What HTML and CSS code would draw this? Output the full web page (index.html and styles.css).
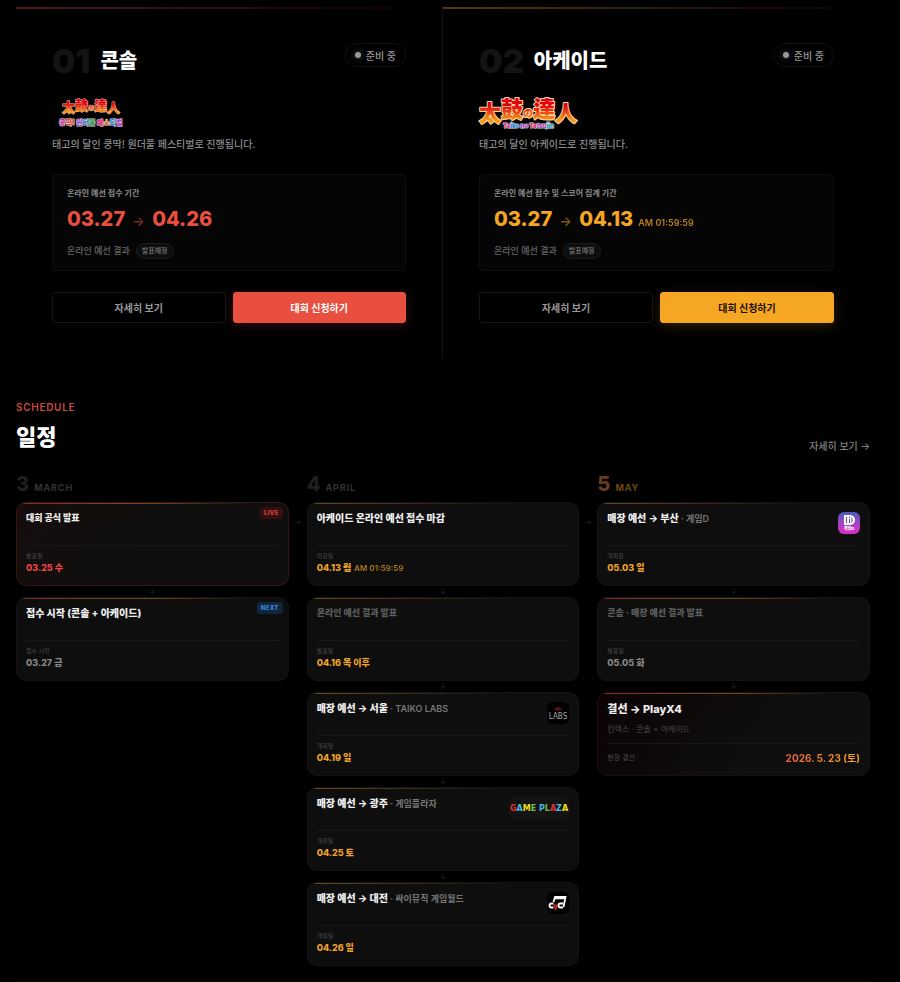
FILE: index.html
```html
<!DOCTYPE html>
<html lang="ko">
<head>
  <meta charset="UTF-8" />
  <meta name="viewport" content="width=device-width, initial-scale=1.0"/>
  <title>태고의 달인 대회</title>
  <link rel="stylesheet" href="styles.css">
</head>
<body>

<section class="tracks">
  <article class="track track-console">
    <div class="track-head">
      <div class="track-name">
        <span class="track-num">01</span>
        <h2>콘솔</h2>
      </div>
      <span class="status"><i class="dot"></i>준비 중</span>
    </div>
    <svg class="track-logo" width="78" height="36" viewBox="0 0 78 36" role="img" aria-label="태고의 달인 쿵딱! 원더풀 페스티벌">
      <defs>
        <linearGradient id="fire" x1="0" y1="0" x2="0" y2="1">
          <stop offset="0.4" stop-color="#e00010"/>
          <stop offset="0.8" stop-color="#f59a1c"/>
        </linearGradient>
      </defs>
      <text class="logo-jp" x="10" y="19" font-size="13" fill="url(#fire)" stroke="#e8b8a0" stroke-width="1">太<tspan dy="-2">鼓</tspan><tspan font-size="6">の</tspan>達<tspan dy="2">人</tspan></text>
      <text class="logo-kr" x="7" y="32" font-size="7" stroke="#e6d3de" stroke-width="1"><tspan fill="#c23a9a">쿵</tspan><tspan fill="#e0442f">딱!</tspan> <tspan fill="#8a4fc0">원</tspan><tspan fill="#1e88d8">더</tspan><tspan fill="#2e9e58">풀</tspan> <tspan fill="#d8327a">페</tspan><tspan fill="#ef7d1a">스</tspan><tspan fill="#1e88d8">티</tspan><tspan fill="#a046b8">벌</tspan></text>
    </svg>
    <p class="track-desc">태고의 달인 쿵딱! 원더풀 페스티벌로 진행됩니다.</p>
    <div class="period">
      <p class="period-label">온라인 예선 접수 기간</p>
      <p class="period-dates"><b>03.27</b><span class="to">→</span><b>04.26</b></p>
      <p class="period-result">온라인 예선 결과 <span class="chip">발표예정</span></p>
    </div>
    <div class="actions">
      <button type="button" class="btn btn-ghost">자세히 보기</button>
      <button type="button" class="btn btn-main">대회 신청하기</button>
    </div>
  </article>

  <article class="track track-arcade">
    <div class="track-head">
      <div class="track-name">
        <span class="track-num">02</span>
        <h2>아케이드</h2>
      </div>
      <span class="status"><i class="dot"></i>준비 중</span>
    </div>
    <svg class="track-logo" width="100" height="36" viewBox="0 0 100 36" role="img" aria-label="태고의 달인">
      <text class="logo-jp" x="0" y="28" font-size="22" fill="url(#fire)" stroke="#ffd9a0" stroke-width="2">太<tspan dy="-4">鼓</tspan><tspan font-size="10">の</tspan>達<tspan dy="4">人</tspan></text>
      <text class="logo-kr" x="24" y="35" font-size="6" stroke="#f3e3ee" stroke-width="1"><tspan fill="#d8327a">Ta</tspan><tspan fill="#1e88d8">iko</tspan> <tspan fill="#a046b8">no</tspan> <tspan fill="#d8327a">Ta</tspan><tspan fill="#a046b8">tsu</tspan><tspan fill="#2a9bb0">jin</tspan></text>
    </svg>
    <p class="track-desc">태고의 달인 아케이드로 진행됩니다.</p>
    <div class="period">
      <p class="period-label">온라인 예선 접수 및 스코어 집계 기간</p>
      <p class="period-dates"><b>03.27</b><span class="to">→</span><b>04.13</b><small>AM 01:59:59</small></p>
      <p class="period-result">온라인 예선 결과 <span class="chip">발표예정</span></p>
    </div>
    <div class="actions">
      <button type="button" class="btn btn-ghost">자세히 보기</button>
      <button type="button" class="btn btn-main">대회 신청하기</button>
    </div>
  </article>
</section>

<section class="schedule">
  <div class="schedule-head">
    <div>
      <p class="eyebrow">SCHEDULE</p>
      <h2>일정</h2>
    </div>
    <a href="#" class="more">자세히 보기 →</a>
  </div>

  <div class="months">
    <div class="month">
      <h3 class="month-title"><b>3</b><span>MARCH</span></h3>
      <span class="next-month">→</span>
      <div class="card card-live mixed">
        <div class="card-top">
          <h4 class="small">대회 공식 발표</h4>
          <span class="badge badge-live">LIVE</span>
        </div>
        <div class="card-foot">
          <span class="label">발표일</span>
          <span class="date red">03.25 수</span>
        </div>
      </div>
      <span class="down">↓</span>
      <div class="card mixed">
        <div class="card-top">
          <h4>접수 시작 (콘솔 + 아케이드)</h4>
          <span class="badge badge-next">NEXT</span>
        </div>
        <div class="card-foot">
          <span class="label">접수 시작</span>
          <span class="date gray">03.27 금</span>
        </div>
      </div>
    </div>

    <div class="month">
      <h3 class="month-title"><b>4</b><span>APRIL</span></h3>
      <span class="next-month">→</span>
      <div class="card">
        <div class="card-top"><h4>아케이드 온라인 예선 접수 마감</h4></div>
        <div class="card-foot">
          <span class="label">마감일</span>
          <span class="date">04.13 월 <small>AM 01:59:59</small></span>
        </div>
      </div>
      <span class="down">↓</span>
      <div class="card">
        <div class="card-top"><h4 class="small dim">온라인 예선 결과 발표</h4></div>
        <div class="card-foot">
          <span class="label">발표일</span>
          <span class="date">04.16 목 이후</span>
        </div>
      </div>
      <span class="down">↓</span>
      <div class="card">
        <div class="card-top">
          <h4>매장 예선 → 서울 <small>· TAIKO LABS</small></h4>
          <svg class="store" width="22" height="22" viewBox="0 0 22 22" role="img" aria-label="TAIKO LABS">
            <rect width="22" height="22" rx="6" fill="#000"/>
            <path d="M8 8Q8 6.500 9.500 6.500 11 5 12.500 6.500 14 6.500 14 8M9.500 8H12.500" fill="none" stroke="#b3202a" stroke-width="1"/>
            <text class="labs" x="11" y="17" text-anchor="middle" font-size="8" fill="#a8a8a8">LABS</text>
          </svg>
        </div>
        <div class="card-foot">
          <span class="label">개최일</span>
          <span class="date">04.19 일</span>
        </div>
      </div>
      <span class="down">↓</span>
      <div class="card">
        <div class="card-top">
          <h4>매장 예선 → 광주 <small>· 게임플라자</small></h4>
          <svg class="store" width="60" height="22" viewBox="0 0 60 22" role="img" aria-label="GAME PLAZA">
            <rect width="60" height="22" rx="6" fill="#141414"/>
            <text class="plaza" x="30" y="14" text-anchor="middle" font-size="8"><tspan fill="#e0322c">G</tspan><tspan fill="#4fb8e0">A</tspan><tspan fill="#f0e01c">M</tspan><tspan fill="#6cc04a">E</tspan> <tspan fill="#4fb8e0">P</tspan><tspan fill="#6cc04a">L</tspan><tspan fill="#e0322c">A</tspan><tspan fill="#4fb8e0">Z</tspan><tspan fill="#f0e01c">A</tspan></text>
          </svg>
        </div>
        <div class="card-foot">
          <span class="label">개최일</span>
          <span class="date">04.25 토</span>
        </div>
      </div>
      <span class="down">↓</span>
      <div class="card">
        <div class="card-top">
          <h4>매장 예선 → 대전 <small>· 싸이뮤직 게임월드</small></h4>
          <svg class="store" width="22" height="22" viewBox="0 0 22 22" role="img" aria-label="싸이뮤직 게임월드">
            <rect width="22" height="22" rx="6" fill="#000"/>
            <g fill="none" stroke="#fff" stroke-width="1.800">
              <path d="M6.500 10L8 5H18.500L16.500 15"/>
              <path d="M8 6.500H18" stroke-width="1.500"/>
              <path d="M6.500 11.500H4.500Q2.500 11.500 2.500 13.500T4.500 15.500H6.500"/>
              <path d="M16 11.500H13.500Q11.500 11.500 11.500 13.500T13.500 15.500H16"/>
            </g>
            <path d="M6.500 12L8.500 15M10.500 12L8 18" fill="none" stroke="#e0322c" stroke-width="1.600"/>
          </svg>
        </div>
        <div class="card-foot">
          <span class="label">개최일</span>
          <span class="date">04.26 일</span>
        </div>
      </div>
    </div>

    <div class="month month-final">
      <h3 class="month-title"><b>5</b><span>MAY</span></h3>
      <div class="card">
        <div class="card-top">
          <h4>매장 예선 → 부산 <small>· 게임D</small></h4>
          <svg class="store" width="22" height="22" viewBox="0 0 22 22" role="img" aria-label="게임D">
            <defs>
              <linearGradient id="gamed" x1="0" y1="0" x2="0" y2="1">
                <stop offset="0" stop-color="#4a5cc0"/>
                <stop offset="0.5" stop-color="#a044c4"/>
                <stop offset="1" stop-color="#e02cc0"/>
              </linearGradient>
            </defs>
            <rect width="22" height="22" rx="6" fill="url(#gamed)"/>
            <path d="M6 3H12Q17 3.500 17 8T12 13H6Z" fill="#fff"/>
            <path d="M8.500 5V11M11.500 7V11M11.500 4.500V6M13.500 5.500Q15 8 13.500 10.500" fill="none" stroke="#5a50a8" stroke-width="1.100"/>
            <text x="11" y="18" text-anchor="middle" font-size="4" font-weight="900" fill="#fff">게임D</text>
          </svg>
        </div>
        <div class="card-foot">
          <span class="label">개최일</span>
          <span class="date">05.03 일</span>
        </div>
      </div>
      <span class="down">↓</span>
      <div class="card mixed">
        <div class="card-top"><h4 class="small dim">콘솔 · 매장 예선 결과 발표</h4></div>
        <div class="card-foot">
          <span class="label">발표일</span>
          <span class="date gray">05.05 화</span>
        </div>
      </div>
      <span class="down">↓</span>
      <div class="card card-final mixed">
        <div class="card-top">
          <div>
            <h4>결선 → PlayX4</h4>
            <p class="place">킨텍스 · 콘솔 + 아케이드</p>
          </div>
        </div>
        <div class="card-foot">
          <span class="label">현장 결선</span>
          <span class="date">2026. 5. 23 (토)</span>
        </div>
      </div>
    </div>
  </div>
</section>

</body>
</html>
```
FILE: styles.css
```css
* {
  box-sizing: border-box;
}
body {
  margin: 0;
  padding: 7px 30px 0 16px;
  background: #000;
  color: #fff;
  font-family: Inter, "Noto Sans CJK KR", sans-serif;
}
h2, h3, h4, p {
  margin: 0;
}

/* tracks */
.tracks {
  display: grid;
  grid-template-columns: 1fr 1fr;
}
.track {
  position: relative;
  padding: 36px 36px 35px;
  --main: #e94f3f;
}
.track-console {
  border-right: 1px solid #141414;
}
.track-arcade {
  --main: #f5a623;
}
.track::before {
  content: "";
  position: absolute;
  top: 0;
  left: 0;
  right: 0;
  height: 2px;
  background: linear-gradient(90deg, var(--main), transparent);
  opacity: 0.35;
}
.track-head {
  display: flex;
  justify-content: space-between;
  align-items: flex-start;
}
.track-name {
  display: flex;
  align-items: center;
  gap: 10px;
  line-height: 36px;
}
.track-num {
  font-size: 33px;
  font-weight: 900;
  color: #141414;
}
.track-name h2 {
  font-size: 20px;
  font-weight: 800;
}
.status {
  display: flex;
  align-items: center;
  gap: 5px;
  height: 24px;
  padding: 0 9px;
  border: 1px solid #111;
  border-radius: 12px;
  font-size: 10px;
  font-weight: 500;
  color: #999;
}
.dot {
  width: 6px;
  height: 6px;
  border-radius: 50%;
  background: #999;
  box-shadow: 0 0 6px rgba(255,255,255,0.35);
}
.track-logo {
  display: block;
  overflow: visible;
  margin-top: 14px;
}
.logo-jp {
  font-family: "Noto Sans CJK JP", sans-serif;
  font-weight: 900;
  paint-order: stroke;
  stroke-linejoin: round;
}
.logo-kr {
  font-weight: 900;
  paint-order: stroke;
  stroke-linejoin: round;
}
.track-desc {
  margin-top: 7px;
  font-size: 10px;
  font-weight: 500;
  line-height: 16px;
  color: #8c8c8c;
}
.period {
  margin-top: 22px;
  padding: 12px 14px 11px;
  border: 1px solid #0e0e0e;
  border-radius: 4px;
  background: #050505;
}
.period-label {
  font-size: 8px;
  font-weight: 600;
  line-height: 12px;
  color: #8c8c8c;
}
.period-dates {
  display: flex;
  align-items: baseline;
  margin-top: 8px;
  line-height: 12px;
  color: var(--main);
}
.period-dates b {
  font-size: 20px;
  font-weight: 800;
  line-height: 24px;
}
.period-dates .to {
  width: 27px;
  text-align: center;
  font-size: 13px;
  font-weight: 600;
  opacity: 0.5;
}
.period-dates small {
  margin-left: 5px;
  font-size: 9px;
  font-weight: 600;
  opacity: 0.75;
}
.period-result {
  display: flex;
  align-items: center;
  gap: 6px;
  margin-top: 12px;
  font-size: 9px;
  font-weight: 500;
  line-height: 16px;
  color: #666;
}
.chip {
  padding: 0 5px;
  border: 1px solid #1c1c1c;
  border-radius: 8px;
  background: #0e0e0e;
  font-size: 7px;
  font-weight: 700;
  line-height: 14px;
}
.actions {
  display: grid;
  grid-template-columns: 1fr 1fr;
  gap: 7px;
  margin-top: 21px;
}
.btn {
  height: 31px;
  padding: 0;
  border: 1px solid #141414;
  border-radius: 3px;
  background: transparent;
  color: #999;
  font-family: inherit;
  font-size: 10px;
  font-weight: 700;
  cursor: pointer;
}
.btn-main {
  border-color: var(--main);
  background: var(--main);
  color: #fff;
  box-shadow: 0 3px 12px rgba(233,79,63,0.2);
}
.track-arcade .btn-main {
  color: #1a1000;
  box-shadow: 0 3px 12px rgba(245,166,35,0.2);
}

/* schedule */
.schedule {
  margin-top: 43px;
  padding-bottom: 15px;
  border-bottom: 1px solid #0e0808;
}
.schedule-head {
  display: flex;
  justify-content: space-between;
  align-items: flex-end;
}
.eyebrow {
  font-size: 10px;
  font-weight: 600;
  line-height: 12px;
  letter-spacing: 0.07em;
  color: #c94a3a;
}
.schedule-head h2 {
  margin-top: 9px;
  font-size: 22px;
  font-weight: 800;
  line-height: 30px;
}
.more {
  font-size: 10px;
  font-weight: 500;
  line-height: 12px;
  color: #808080;
  text-decoration: none;
}
.months {
  display: grid;
  grid-template-columns: 1fr 1fr 1fr;
  gap: 18px;
  margin-top: 20px;
}
.month {
  position: relative;
}
.month-title {
  display: flex;
  align-items: baseline;
  gap: 5px;
  margin-bottom: 6px;
  font-size: 9px;
  font-weight: 700;
  line-height: 12px;
  letter-spacing: 0.1em;
  color: #333;
}
.month-title b {
  font-size: 20px;
  font-weight: 800;
  line-height: 24px;
  letter-spacing: 0;
  color: #1f1f1f;
}
.month-final .month-title {
  color: #70480f;
}
.month-final .month-title b {
  color: #6b3a1c;
}
.next-month {
  position: absolute;
  top: 44px;
  left: 100%;
  width: 18px;
  text-align: center;
  font-size: 8px;
  line-height: 12px;
  color: #222;
}
.down {
  display: block;
  text-align: center;
  font-size: 8px;
  line-height: 11px;
  color: #222;
}
.card {
  position: relative;
  overflow: hidden;
  padding: 8px 9px 10px;
  border: 1px solid #131313;
  border-radius: 10px;
  background: #0e0e0e;
}
.card::before {
  content: "";
  position: absolute;
  top: -1px;
  left: 0;
  right: 0;
  height: 2px;
  background: linear-gradient(90deg, #f5a623, transparent 75%);
  opacity: 0.4;
}
.card.mixed::before {
  background: linear-gradient(90deg, #e94f3f, #c98a1c 50%, transparent 85%);
  opacity: 0.5;
}
.card-live {
  border-color: #3a1414;
  background: linear-gradient(135deg, #160d0d, #0f0f0f 50%);
}
.card-top {
  display: flex;
  justify-content: space-between;
  align-items: flex-start;
  min-height: 34px;
}
.card h4 {
  font-size: 10px;
  font-weight: 800;
  line-height: 14px;
  color: #eee;
}
.card h4 small {
  font-size: 9px;
  font-weight: 600;
  color: #777;
}
.card h4.small {
  font-size: 9px;
}
.card h4.dim {
  color: #5c5c5c;
}
.store {
  flex: none;
  margin-top: 1px;
}
.labs {
  font-family: "Liberation Sans Narrow", "DejaVu Sans Condensed", sans-serif;
}
.plaza {
  font-family: "DejaVu Sans", sans-serif;
  font-weight: 700;
}
.badge {
  margin: -4px -4px 0 0;
  padding: 0 4px;
  border-radius: 3px;
  font-size: 6px;
  font-weight: 800;
  line-height: 12px;
  letter-spacing: 0.05em;
}
.badge-live {
  background: #361010;
  color: #dc4040;
}
.badge-next {
  background: #10263f;
  color: #3f86d8;
}
.card-foot {
  display: flex;
  flex-direction: column;
  gap: 1px;
  padding-top: 6px;
  border-top: 1px solid #171717;
}
.label {
  font-size: 6px;
  line-height: 8px;
  color: #4a4a4a;
}
.date {
  font-size: 9px;
  font-weight: 800;
  line-height: 14px;
  color: #f0a32a;
}
.date small {
  margin-left: 1px;
  font-size: 8px;
  font-weight: 600;
  opacity: 0.7;
}
.date.red {
  color: #ee4545;
}
.date.gray {
  color: #888;
}
.card-final {
  border-color: #1a1010;
  background: linear-gradient(120deg, #0c0303, #0f0f0f 60%);
}
.card-final .card-top {
  min-height: 42px;
}
.card-final h4 {
  font-size: 11px;
  line-height: 16px;
}
.place {
  margin-top: 6px;
  font-size: 8px;
  line-height: 12px;
  color: #4a4a4a;
}
.card-final .card-foot {
  flex-direction: row;
  justify-content: space-between;
  align-items: center;
  padding-top: 7px;
}
.card-final .label {
  font-size: 7px;
}
.card-final .date {
  font-size: 10px;
  font-weight: 700;
  background: linear-gradient(90deg, #ee6045, #f5a623);
  background-clip: text;
  -webkit-background-clip: text;
  color: transparent;
}
```
